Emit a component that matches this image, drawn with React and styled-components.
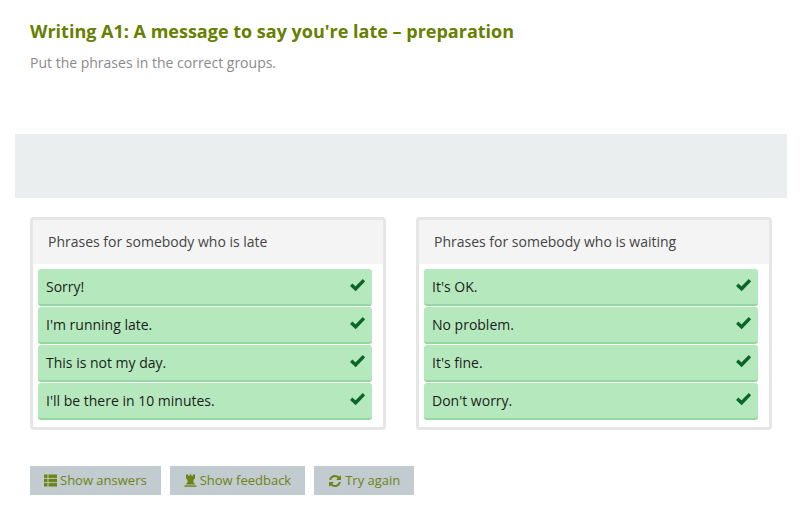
import styled, { createGlobalStyle } from "styled-components";

const GlobalStyle = createGlobalStyle`
  html, body {
    margin: 0;
    padding: 0;
    background: #fff;
    font-family: "Open Sans", sans-serif;
  }
`;

const groups = [
  {
    title: "Phrases for somebody who is late",
    items: ["Sorry!", "I'm running late.", "This is not my day.", "I'll be there in 10 minutes."],
  },
  {
    title: "Phrases for somebody who is waiting",
    items: ["It's OK.", "No problem.", "It's fine.", "Don't worry."],
  },
];

const ListIcon = () => (
  <svg width="13" height="13" viewBox="0 0 13 13" fill="currentColor">
    <rect x="0" y="0.5" width="3.5" height="3.4" />
    <rect x="4.5" y="0.5" width="8.5" height="3.4" />
    <rect x="0" y="4.8" width="3.5" height="3.4" />
    <rect x="4.5" y="4.8" width="8.5" height="3.4" />
    <rect x="0" y="9.1" width="3.5" height="3.4" />
    <rect x="4.5" y="9.1" width="8.5" height="3.4" />
  </svg>
);

const TowerIcon = () => (
  <svg width="13" height="13" viewBox="0 0 13 13" fill="currentColor">
    <path d="M2 0.5h2.2v1.5h1.3V0.5h2v1.5h1.3V0.5H11v4L9.5 5.7V9h1l.5 1.5H2l.5-1.5h1V5.7L2 4.5z" />
    <rect x="0.5" y="11.4" width="12" height="1.4" />
  </svg>
);

const RefreshIcon = () => (
  <svg width="14" height="14" viewBox="0 0 1792 1792" fill="currentColor">
    <path d="M1639 1056q0 5-1 7-64 268-268 434.5t-478 166.5q-146 0-282.5-55t-243.5-157l-129 129q-19 19-45 19t-45-19-19-45v-448q0-26 19-45t45-19h448q26 0 45 19t19 45-19 45l-137 137q71 66 161 102t187 36q134 0 250-65t186-179q11-17 53-117 8-23 30-23h192q13 0 22.5 9.5t9.5 22.5zm25-800v448q0 26-19 45t-45 19h-448q-26 0-45-19t-19-45 19-45l138-138q-148-137-349-137-134 0-250 65t-186 179q-11 17-53 117-8 23-30 23h-199q-13 0-22.5-9.5t-9.5-22.5v-7q65-268 270-434.5t480-166.5q146 0 284 55.5t245 156.5l130-129q19-19 45-19t45 19 19 45z" />
  </svg>
);

const CheckIcon = ({ className }) => (
  <svg className={className} viewBox="0 0 15 14" fill="none" stroke="currentColor" strokeWidth="3.4">
    <path d="M1.2 6.8L5.6 10.8L14 2.2" />
  </svg>
);

const buttons = [
  { label: "Show answers", icon: <ListIcon /> },
  { label: "Show feedback", icon: <TowerIcon /> },
  { label: "Try again", icon: <RefreshIcon /> },
];

const App = () => {
  return (
    <>
      <GlobalStyle />
      <Page>
        <Header>
          <Title>Writing A1: A message to say you're late – preparation</Title>
          <Intro>Put the phrases in the correct groups.</Intro>
        </Header>
        <Pool />
        <Groups>
          {groups.map((group) => (
            <Group key={group.title}>
              <GroupTitle>{group.title}</GroupTitle>
              <Items>
                {group.items.map((item) => (
                  <Item key={item}>
                    {item}
                    <Tick />
                  </Item>
                ))}
              </Items>
            </Group>
          ))}
        </Groups>
        <Actions>
          {buttons.map((b) => (
            <ActionBTN key={b.label}>
              {b.icon}
              <span>{b.label}</span>
            </ActionBTN>
          ))}
        </Actions>
      </Page>
    </>
  );
};

export default App;

const Page = styled.div`
  width: 801px;
  height: 515px;
  overflow: hidden;
  box-sizing: border-box;
  padding: 0 14px 0 15px;
`;

const Header = styled.div`
  height: 134px;
  padding: 19px 15px 0;
  box-sizing: border-box;
`;

const Title = styled.h1`
  margin: 0;
  color: #668000;
  font-size: 18px;
  font-weight: 700;
  line-height: 24px;
`;

const Intro = styled.p`
  margin: 10px 0 0;
  color: #8a8a8a;
  font-size: 14px;
  line-height: 20px;
`;

const Pool = styled.div`
  height: 64px;
  background: #ebeeef;
`;

const Groups = styled.div`
  display: flex;
  gap: 30px;
  padding: 19px 15px 0;
`;

const Group = styled.div`
  width: 356px;
  height: 213px;
  box-sizing: border-box;
  border: 3px solid #e6e6e6;
  border-radius: 4px;
`;

const GroupTitle = styled.div`
  height: 44px;
  padding-left: 15px;
  background: #f4f4f4;
  color: #444;
  font-size: 14px;
  line-height: 43px;
`;

const Items = styled.div`
  display: flex;
  flex-direction: column;
  gap: 1px;
  padding: 5px 11px 0 5px;
`;

const Item = styled.div`
  display: flex;
  justify-content: space-between;
  height: 37px;
  box-sizing: border-box;
  padding: 0 7px 0 8px;
  background: #b5e8bd;
  border-bottom: 2px solid #94d8a0;
  border-radius: 3px;
  color: #1c1c1c;
  font-size: 14px;
  line-height: 36px;
`;

const Tick = styled(CheckIcon)`
  margin-top: 9px;
  width: 15px;
  height: 14px;
  color: #0a6628;
`;

const Actions = styled.div`
  display: flex;
  gap: 9px;
  padding: 36px 15px 0;
`;

const ActionBTN = styled.div`
  display: flex;
  align-items: center;
  gap: 3px;
  height: 29px;
  padding: 0 14px;
  background: #c2cbcf;
  color: #6b8413;
  font-size: 13px;

  span {
    margin-top: -2px;
  }
`;
